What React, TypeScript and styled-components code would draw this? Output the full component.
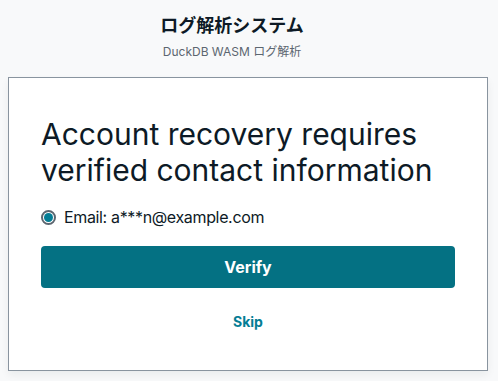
import React, { useState } from 'react';
import styled, { createGlobalStyle } from 'styled-components';

const GlobalStyle = createGlobalStyle`
  html, body {
    margin: 0;
    padding: 0;
    background-color: #f8f9fa;
    font-family: Inter, "Noto Sans CJK JP", "Noto Sans", sans-serif;
    color: #0d1a26;
  }
  * {
    box-sizing: border-box;
  }
`;

const App = () => {
  const [selected, setSelected] = useState('email');
  return (
    <>
      <GlobalStyle />
      <Page>
        <Header>
          <AppTitle>ログ解析システム</AppTitle>
          <AppSubtitle>DuckDB WASM ログ解析</AppSubtitle>
        </Header>
        <Card>
          <Form onSubmit={(e) => e.preventDefault()}>
            <Heading>
              Account recovery requires verified contact information
            </Heading>
            <RadioLabel>
              <RadioInput
                type="radio"
                name="contact"
                value="email"
                checked={selected === 'email'}
                onChange={() => setSelected('email')}
              />
              <RadioText>Email: a***n@example.com</RadioText>
            </RadioLabel>
            <Actions>
              <PrimaryButton type="submit">Verify</PrimaryButton>
              <LinkButton type="button">Skip</LinkButton>
            </Actions>
          </Form>
        </Card>
      </Page>
    </>
  );
};

export default App;

const Page = styled.div`
  display: flex;
  flex-direction: column;
  padding: 14px 11px 10px 8px;
`;

const Header = styled.header`
  display: flex;
  flex-direction: column;
  align-items: center;
  width: 464px;
  margin-left: -8px;
  gap: 6px;
  margin-bottom: 17px;
`;

const AppTitle = styled.h1`
  margin: 0;
  font-size: 18px;
  line-height: 24px;
  font-weight: 700;
  color: #0d1a26;
`;

const AppSubtitle = styled.p`
  margin: 0;
  font-size: 12px;
  line-height: 16px;
  color: #5c6670;
`;

const Card = styled.div`
  width: 480px;
  background-color: #ffffff;
  border: 1px solid #89949f;
  box-shadow: 0 4px 8px rgba(13, 26, 38, 0.06);
  padding: 32px;
`;

const Form = styled.form`
  display: flex;
  flex-direction: column;
`;

const Heading = styled.h3`
  margin: 6px 0 17px;
  font-size: 30px;
  line-height: 36px;
  font-weight: 400;
  color: #0d1a26;
`;

const RadioLabel = styled.label`
  display: flex;
  align-items: center;
  gap: 8px;
  height: 24px;
  cursor: pointer;
`;

const RadioInput = styled.input`
  appearance: none;
  margin: 0;
  width: 15px;
  height: 15px;
  border-radius: 50%;
  border: 2px solid #5c6670;
  background-color: #ffffff;
  display: grid;
  place-items: center;

  &::before {
    content: '';
    width: 9px;
    height: 9px;
    border-radius: 50%;
    background-color: #047d95;
    transform: scale(0);
  }
  &:checked::before {
    transform: scale(1);
  }
`;

const RadioText = styled.span`
  font-size: 16px;
  line-height: 24px;
  letter-spacing: -0.35px;
  color: #0d1a26;
`;

const Actions = styled.div`
  display: flex;
  flex-direction: column;
  gap: 16px;
  margin-top: 17px;
`;

const PrimaryButton = styled.button`
  height: 42px;
  border: none;
  border-radius: 4px;
  background-color: #047183;
  color: #ffffff;
  font-family: inherit;
  font-size: 16px;
  font-weight: 700;
  cursor: pointer;
`;

const LinkButton = styled.button`
  align-self: center;
  height: 34px;
  padding: 0 12px;
  border: none;
  background: transparent;
  color: #047d95;
  font-family: inherit;
  font-size: 14px;
  font-weight: 700;
  cursor: pointer;
`;
